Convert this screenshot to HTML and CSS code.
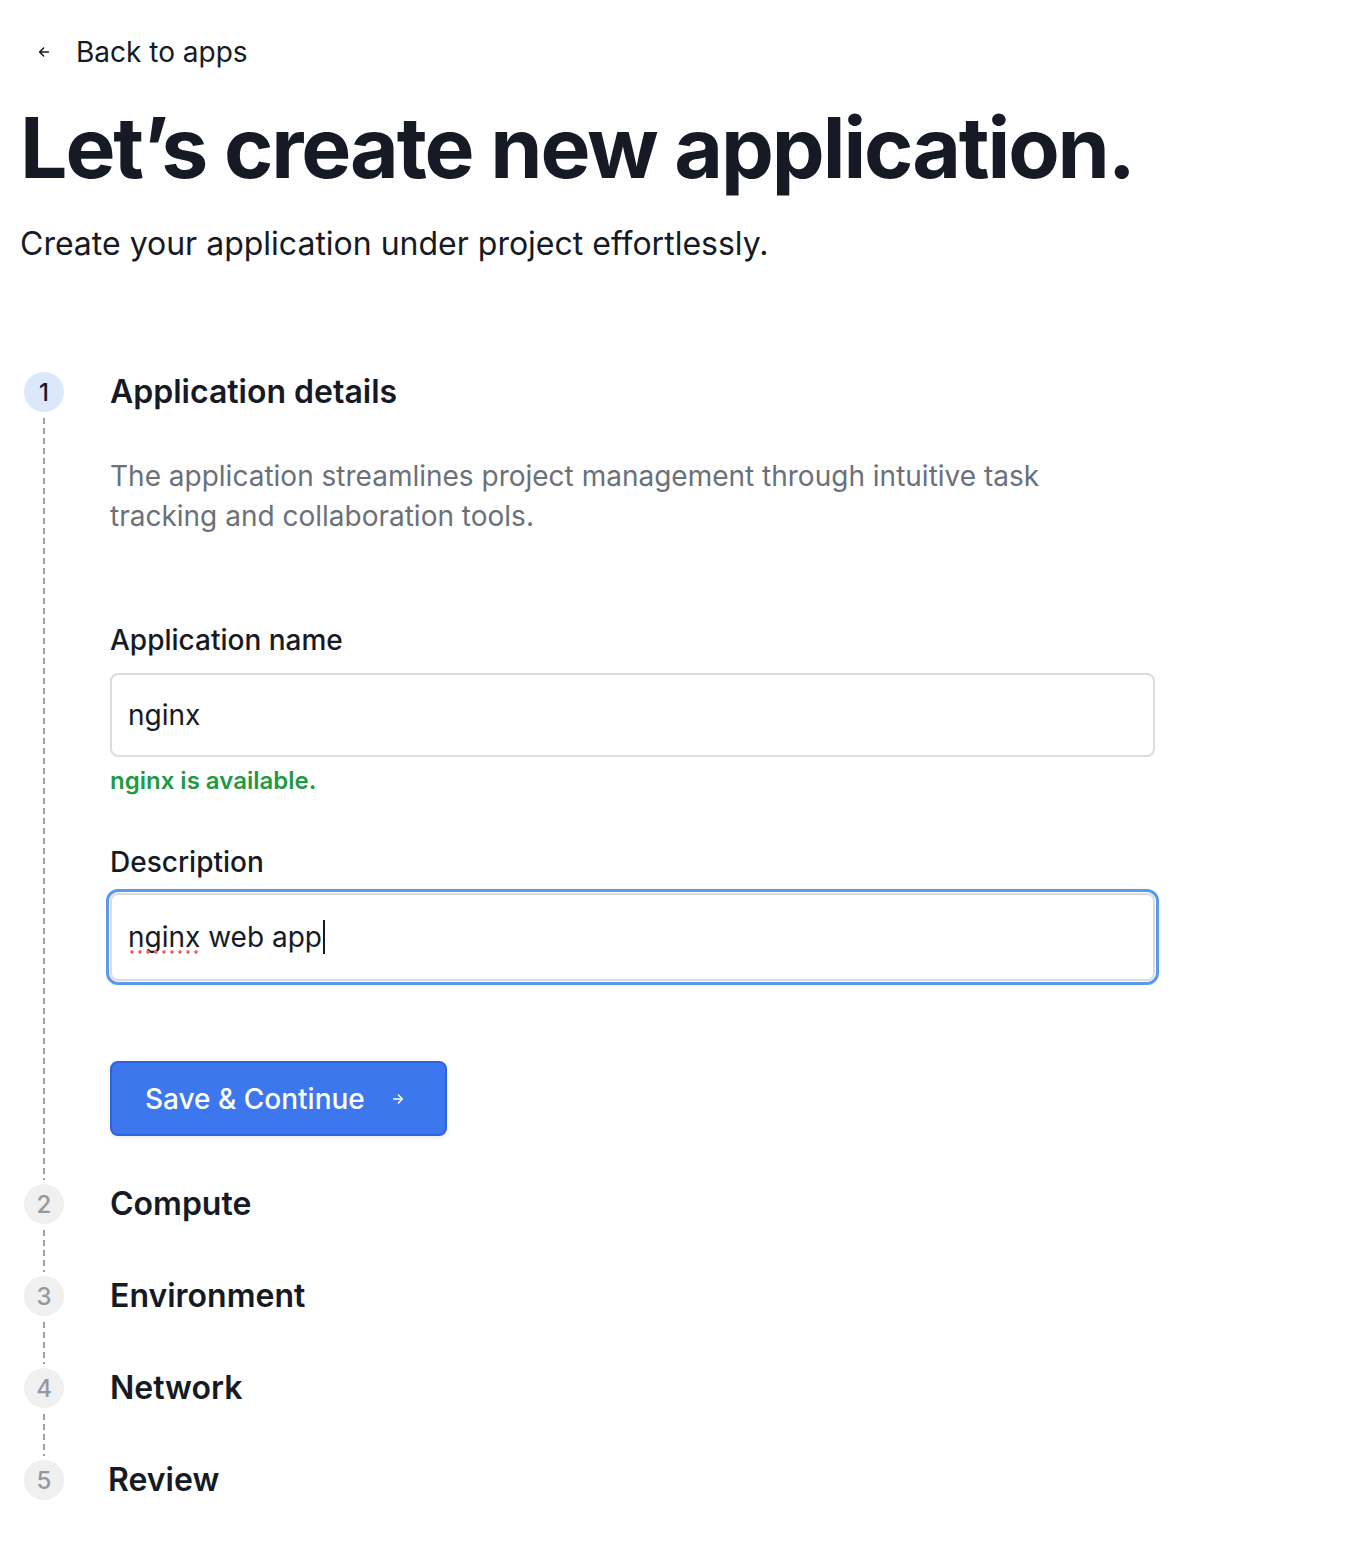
FILE: index.html
```html
<!DOCTYPE html>
<html lang="en">
<head>
<meta charset="utf-8">
<title>Create new application</title>
<link rel="stylesheet" href="styles.css">
</head>
<body>
<main class="page">
  <a class="back" href="#">
    <svg class="back-icon" viewBox="0 0 16 16" width="14" height="14" aria-hidden="true"><path d="M13 8H3.5M7.5 3.5L3 8l4.5 4.5" fill="none" stroke="currentColor" stroke-width="1.8" stroke-linecap="round" stroke-linejoin="round"/></svg>
    <span>Back to apps</span>
  </a>
  <h1 class="title">Let’s create new application.</h1>
  <p class="subtitle">Create your application under project effortlessly.</p>

  <ol class="steps">
    <li class="step step-active">
      <div class="rail"><span class="num">1</span><span class="line"></span></div>
      <div class="body">
        <h2 class="step-title">Application details</h2>
        <p class="step-desc">The application streamlines project management through intuitive task tracking and collaboration tools.</p>
        <div class="field">
          <label class="label" for="appname">Application name</label>
          <input class="input" id="appname" type="text" value="nginx">
          <p class="hint">nginx is available.</p>
        </div>
        <div class="field field-desc">
          <label class="label">Description</label>
          <div class="focus-ring">
            <div class="input input-fake" role="textbox"><span class="spell">nginx</span> web app<span class="caret"></span></div>
          </div>
        </div>
        <button class="btn" type="button">Save &amp; Continue
          <svg class="btn-icon" viewBox="0 0 16 16" width="14" height="14" aria-hidden="true"><path d="M3 8h9.5M8.5 3.5L13 8l-4.5 4.5" fill="none" stroke="currentColor" stroke-width="1.8" stroke-linecap="round" stroke-linejoin="round"/></svg>
        </button>
      </div>
    </li>
    <li class="step">
      <div class="rail"><span class="num">2</span><span class="line"></span></div>
      <div class="body"><h2 class="step-title">Compute</h2></div>
    </li>
    <li class="step">
      <div class="rail"><span class="num">3</span><span class="line"></span></div>
      <div class="body"><h2 class="step-title">Environment</h2></div>
    </li>
    <li class="step">
      <div class="rail"><span class="num">4</span><span class="line"></span></div>
      <div class="body"><h2 class="step-title">Network</h2></div>
    </li>
    <li class="step step-last">
      <div class="rail"><span class="num">5</span></div>
      <div class="body"><h2 class="step-title step-title-review">Review</h2></div>
    </li>
  </ol>
</main>
</body>
</html>
```
FILE: styles.css
```css
* { box-sizing: border-box; }
html, body { margin: 0; padding: 0; background: #fff; }
body {
  font-family: Inter, "Noto Sans", "Liberation Sans", sans-serif;
  color: #151a24;
}
.page { padding: 32px 20px 40px 20px; }

.back {
  display: flex;
  align-items: center;
  gap: 25px;
  color: #151a24;
  text-decoration: none;
  font-size: 28px;
  line-height: 40px;
  padding-left: 17px;
}
.back-icon { color: #151a24; }

.title {
  margin: 26px 0 0 0;
  font-size: 84px;
  line-height: 100px;
  font-weight: 700;
  letter-spacing: -2.1px;
  color: #151a24;
}
.subtitle {
  margin: 24px 0 0 0;
  font-size: 32px;
  line-height: 44px;
  color: #151a24;
}

.steps {
  list-style: none;
  margin: 106px 0 0 0;
  padding: 0 0 0 4px;
}
.step {
  display: flex;
  gap: 46px;
}
.rail {
  width: 40px;
  flex: none;
  display: flex;
  flex-direction: column;
  align-items: center;
}
.num {
  width: 40px;
  height: 40px;
  flex: none;
  border-radius: 50%;
  background: #f0f0f1;
  color: #9299a5;
  font-size: 24px;
  font-weight: 500;
  display: flex;
  align-items: center;
  justify-content: center;
}
.step-active .num { background: #dbe8fb; color: #151a24; }
.line {
  flex: 1;
  width: 2px;
  margin: 6px 0 4px 0;
  background-image: linear-gradient(to bottom, #9aa1ad 0 6px, transparent 6px 10px);
  background-size: 2px 10px;
  background-repeat: repeat-y;
}
.body { flex: 1; padding-bottom: 52px; }
.step-last .body { padding-bottom: 0; }
.step-active .body { padding-bottom: 48px; }

.step-title {
  margin: 0;
  font-size: 32px;
  line-height: 40px;
  font-weight: 600;
  color: #151a24;
}
.step-title-review { margin-left: -2px; }
.step-desc {
  margin: 44px 0 0 0;
  max-width: 960px;
  font-size: 28px;
  line-height: 40px;
  color: #6b7079;
}
.field { width: 1045px; margin-top: 84px; }
.field-desc { margin-top: 47px; }
.label {
  display: block;
  font-size: 28px;
  line-height: 40px;
  font-weight: 500;
  color: #151a24;
  margin-bottom: 13px;
}
.input {
  display: block;
  width: 100%;
  height: 84px;
  border: 2px solid #dcdcdd;
  border-radius: 8px;
  background: #fff;
  padding: 0 16px;
  font: inherit;
  font-size: 28px;
  color: #151a24;
  outline: none;
}
.field-desc .label { margin-bottom: 7px; }
.focus-ring {
  margin: 0 -4px;
  padding: 1px;
  border: 3px solid #5b98ef;
  border-radius: 12px;
}
.input-fake {
  height: 88px;
  display: flex;
  align-items: center;
  white-space: pre;
}
.spell {
  position: relative;
}
.spell::after {
  content: "";
  position: absolute;
  left: 0;
  right: 0;
  bottom: 0;
  height: 4px;
  background-image: radial-gradient(circle, #f26767 1.5px, transparent 1.9px);
  background-size: 8px 4px;
  background-repeat: repeat-x;
  background-position: 0 0;
}
.caret {
  display: inline-block;
  width: 2px;
  height: 34px;
  background: #151a24;
  margin-left: 1px;
}
.hint {
  margin: 10px 0 0 0;
  font-size: 24px;
  line-height: 28px;
  font-weight: 600;
  color: #1f9a44;
}
.btn {
  margin-top: 76px;
  display: inline-flex;
  align-items: center;
  gap: 26px;
  height: 75px;
  padding: 0 40px 0 33px;
  background: #3c77ee;
  border: 2px solid #2d62e0;
  border-radius: 8px;
  color: #fff;
  font: inherit;
  font-size: 28px;
  font-weight: 500;
  box-shadow: 0 2px 4px rgba(0,0,0,0.08);
  cursor: pointer;
}
.btn-icon { color: #fff; }
```
